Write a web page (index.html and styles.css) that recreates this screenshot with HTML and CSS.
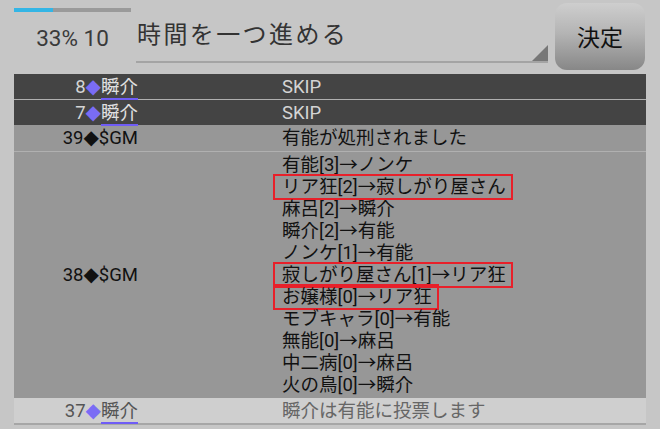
FILE: index.html
```html
<!DOCTYPE html>
<html lang="ja">
<head>
	<meta charset="UTF-8">
	<meta name="viewport" content="width=device-width, initial-scale=1.0">
	<title>ログ</title>
	<link rel="stylesheet" href="styles.css">
</head>

<body>
	<div class="screen">
		<!-- header: progress, action select, confirm button -->
		<div class="header">
			<div class="status">
				<div class="progress"><div class="progress-fill"></div></div>
				<div class="status-label">33% 10</div>
			</div>
			<div class="select">
				<span class="select-text">時間を一つ進める</span>
				<span class="select-arrow"></span>
			</div>
			<div class="button">決定</div>
		</div>

		<!-- log list -->
		<div class="log">
			<div class="row dark sep">
				<div class="who">8<span class="dia">◆</span><span class="name">瞬介</span></div>
				<div class="what">SKIP</div>
			</div>
			<div class="row dark">
				<div class="who">7<span class="dia">◆</span><span class="name">瞬介</span></div>
				<div class="what">SKIP</div>
			</div>
			<div class="row mid sep">
				<div class="who">39<span class="dia">◆</span>$GM</div>
				<div class="what">有能が処刑されました</div>
			</div>
			<div class="row mid">
				<div class="who">38<span class="dia">◆</span>$GM</div>
				<div class="what">
					<div>有能[3]→ノンケ</div>
					<div><span class="mark">リア狂[2]→寂しがり屋さん</span></div>
					<div>麻呂[2]→瞬介</div>
					<div>瞬介[2]→有能</div>
					<div>ノンケ[1]→有能</div>
					<div><span class="mark">寂しがり屋さん[1]→リア狂</span></div>
					<div><span class="mark">お嬢様[0]→リア狂</span></div>
					<div>モブキャラ[0]→有能</div>
					<div>無能[0]→麻呂</div>
					<div>中二病[0]→麻呂</div>
					<div>火の鳥[0]→瞬介</div>
				</div>
			</div>
			<div class="row light last">
				<div class="who">37<span class="dia">◆</span><span class="name">瞬介</span></div>
				<div class="what">瞬介は有能に投票します</div>
			</div>
		</div>
	</div>
</body>

</html>
```

FILE: styles.css
```css
* {
	margin: 0;
	padding: 0;
	box-sizing: border-box;
}
body {
	font: normal 18.5px/22px Roboto, "Noto Sans CJK JP", sans-serif;
	background: #c6c6c6;
	color: #111;
}
.screen {
	width: 660px;
	height: 429px;
	overflow: hidden;
}

/* header */
.header {
	display: flex;
	height: 74px;
}
.status {
	width: 131px;
	padding-left: 14px;
	padding-top: 8px;
}
.progress {
	height: 4px;
	background: #9a9a9a;
}
.progress-fill {
	width: 33%;
	height: 100%;
	background: #33b5e5;
}
.status-label {
	margin-top: 13px;
	font-size: 22.5px;
	line-height: 26px;
	text-align: center;
	color: #3a3a3a;
}
.select {
	position: relative;
	width: 412px;
	height: 63px;
	margin-left: 5px;
	padding-top: 17px;
	border-bottom: 2px solid #a4a4a4;
}
.select-text {
	display: block;
	padding-left: 1px;
	font: normal 24px/32px "Noto Sans CJK JP", sans-serif;
	letter-spacing: 2.4px;
	color: #333;
}
.select-arrow {
	position: absolute;
	right: 0;
	bottom: 0;
	width: 0;
	height: 0;
	border-left: 16px solid transparent;
	border-bottom: 16px solid #777;
}
.button {
	display: flex;
	align-items: center;
	justify-content: center;
	width: 90px;
	height: 67px;
	margin: 3px 0 0 7px;
	border-radius: 12px;
	background: linear-gradient(to bottom, #cecece 0%, #b4b4b4 45%, #878787 100%);
	font: normal 23px/1 "Noto Sans CJK JP", sans-serif;
	color: #111;
}

/* log list */
.log {
	width: 632px;
	margin-left: 14px;
}
.row {
	display: grid;
	grid-template-columns: 126px 1fr;
	column-gap: 142px;
	align-items: center;
	padding: 2px 0 1px;
}
.row.mid {
	padding: 2px 0 2px;
}
.row.sep {
	border-bottom: 1px solid #b0b0b0;
}
.row.last {
	border-bottom: 2px solid #a6a6a6;
}
.dark {
	background: #444;
	color: #d4d4d4;
}
.mid {
	background: #979797;
	color: #111;
}
.light {
	background: #cfcfcf;
	color: #555;
}
.who {
	text-align: right;
	padding-right: 2px;
	white-space: nowrap;
}
.dia {
	font-family: "DejaVu Sans", sans-serif;
	font-size: 20px;
	line-height: 1;
	color: #7a6cf5;
}
.mid .dia {
	color: #111;
}
.name {
	border-bottom: 2px solid #6f5cf6;
}
.dark .name {
	color: #e0e0e0;
}
.light .what {
	color: #666;
}
.mark {
	display: inline-block;
	margin-left: -7px;
	padding: 0 5px 0 7px;
	outline: 2px solid #e8202a;
}
```
